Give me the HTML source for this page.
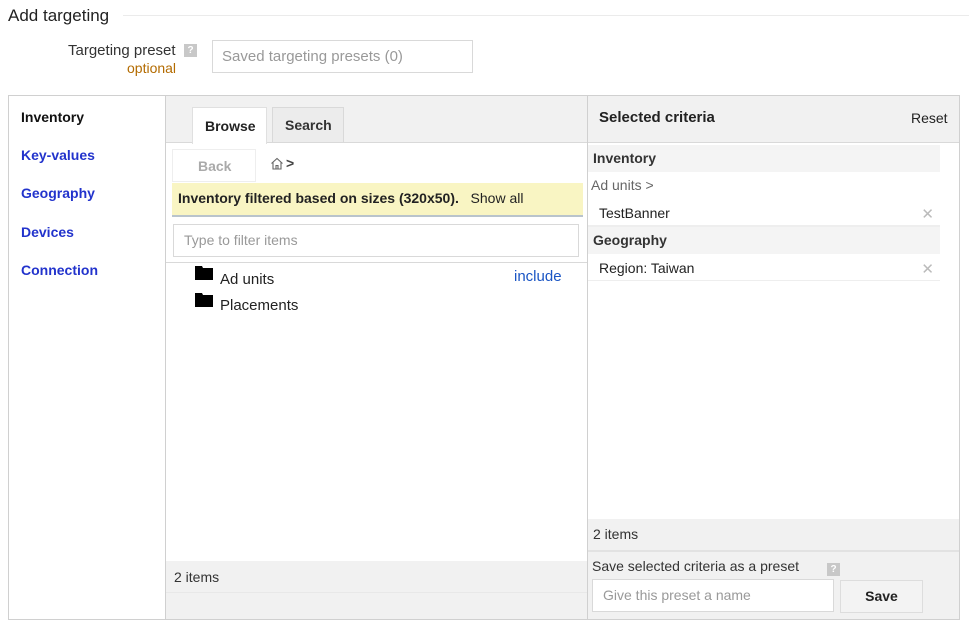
<!DOCTYPE html>
<html><head><style>
*{box-sizing:border-box;margin:0;padding:0}
body{width:969px;height:629px;background:#fff;font-family:"Liberation Sans",Arial,sans-serif;font-size:14px;color:#222;position:relative;overflow:hidden}
.a{position:absolute}
.blue{color:#2233cc;font-weight:bold;font-size:14px}
.q{display:inline-block;width:13px;height:13px;background:#c8c8c8;color:#fff;font-size:10px;font-weight:bold;text-align:center;line-height:13px}
.x{color:#bbb;font-size:15px}
</style></head><body>
<div class="a" style="left:8px;top:6px;font-size:17px;color:#222">Add targeting</div>
<div class="a" style="left:123px;top:15px;width:846px;height:1px;background:#ebebeb"></div>
<div class="a" style="left:68px;top:42px;font-size:15px;color:#333">Targeting preset</div>
<div class="a" style="left:184px;top:40px"><span class="q">?</span></div>
<div class="a" style="left:127px;top:60px;font-size:14px;color:#b36b00">optional</div>
<div class="a" style="left:212px;top:40px;width:261px;height:33px;border:1px solid #d9d9d9;color:#999;padding:7px 9px;font-size:15px">Saved targeting presets (0)</div>

<div class="a" style="left:8px;top:95px;width:952px;height:525px;border:1px solid #d0d0d0"></div>
<div class="a" style="left:21px;top:109px;font-weight:bold;font-size:14px;color:#111">Inventory</div>
<div class="a blue" style="left:21px;top:147px">Key-values</div>
<div class="a blue" style="left:21px;top:185px">Geography</div>
<div class="a blue" style="left:21px;top:224px">Devices</div>
<div class="a blue" style="left:21px;top:262px">Connection</div>

<div class="a" style="left:165px;top:96px;width:1px;height:523px;background:#d0d0d0"></div>
<div class="a" style="left:166px;top:96px;width:421px;height:47px;background:#f1f1f1;border-bottom:1px solid #d9d9d9"></div>
<div class="a" style="left:192px;top:107px;width:75px;height:37px;background:#fff;border:1px solid #e0e0e0;border-bottom:none;font-weight:bold;font-size:14px;padding:10px 0 0 12px">Browse</div>
<div class="a" style="left:272px;top:107px;width:72px;height:36px;background:#ececec;border:1px solid #d9d9d9;font-weight:bold;font-size:14px;padding:9px 0 0 12px;color:#333">Search</div>
<div class="a" style="left:172px;top:149px;width:84px;height:33px;border:1px solid #eee;color:#aaa;font-weight:bold;font-size:14px;padding:8px 0 0 25px">Back</div>
<svg class="a" style="left:270px;top:157px" width="14" height="13" viewBox="0 0 14 13"><path d="M1.5 6.5 L7 1.5 L12.5 6.5 M3 5.5 V12 H11 V5.5 M6 12 V8.5 H8 V12" fill="none" stroke="#666" stroke-width="1.1"/></svg>
<div class="a" style="left:286px;top:155px;font-size:14px;font-weight:bold;color:#444">&gt;</div>
<div class="a" style="left:172px;top:183px;width:411px;height:34px;background:#f9f5c3;border-bottom:2px solid #b9c4cc;padding:7px 0 0 6px;font-size:14px"><b>Inventory filtered based on sizes (320x50).</b>&nbsp;&nbsp; Show all</div>
<div class="a" style="left:173px;top:224px;width:406px;height:33px;border:1px solid #d9d9d9;color:#999;padding:7px 10px;font-size:14px">Type to filter items</div>
<div class="a" style="left:166px;top:262px;width:421px;height:1px;background:#d9d9d9"></div>
<svg class="a" style="left:195px;top:265px" width="18" height="15"><path d="M0 1h7l1 2h10v12H0z" fill="#000"/></svg>
<div class="a" style="left:220px;top:271px;font-size:15px">Ad units</div>
<div class="a" style="left:514px;top:268px;font-size:15px;color:#1a55c4">include</div>
<svg class="a" style="left:195px;top:292px" width="18" height="15"><path d="M0 1h7l1 2h10v12H0z" fill="#000"/></svg>
<div class="a" style="left:220px;top:297px;font-size:15px">Placements</div>
<div class="a" style="left:166px;top:561px;width:421px;height:58px;background:#f1f1f1"></div>
<div class="a" style="left:166px;top:592px;width:421px;height:1px;background:#e8e8e8"></div>
<div class="a" style="left:174px;top:569px;font-size:14px;color:#333">2 items</div>

<div class="a" style="left:587px;top:96px;width:1px;height:523px;background:#d0d0d0"></div>
<div class="a" style="left:588px;top:96px;width:371px;height:47px;background:#f1f1f1;border-bottom:1px solid #d9d9d9"></div>
<div class="a" style="left:599px;top:109px;font-weight:bold;font-size:15px">Selected criteria</div>
<div class="a" style="left:911px;top:110px;font-size:14px">Reset</div>
<div class="a" style="left:588px;top:145px;width:352px;height:27px;background:#f4f4f4;padding:5px 0 0 5px;font-weight:bold;font-size:14px;color:#333">Inventory</div>
<div class="a" style="left:591px;top:177px;font-size:14px;color:#666">Ad units &gt;</div>
<div class="a" style="left:588px;top:200px;width:352px;height:27px;border-bottom:2px solid #eee;padding:5px 0 0 11px;font-size:14px">TestBanner<span class="a x" style="right:6px;top:5px">✕</span></div>
<div class="a" style="left:588px;top:227px;width:352px;height:27px;background:#f4f4f4;padding:5px 0 0 5px;font-weight:bold;font-size:14px;color:#333">Geography</div>
<div class="a" style="left:588px;top:255px;width:352px;height:26px;border-bottom:1px solid #eee;padding:5px 0 0 11px;font-size:14px">Region: Taiwan<span class="a x" style="right:6px;top:5px">✕</span></div>
<div class="a" style="left:588px;top:519px;width:371px;height:100px;background:#f1f1f1"></div>
<div class="a" style="left:588px;top:550px;width:371px;height:2px;background:#e2e2e2"></div>
<div class="a" style="left:593px;top:526px;font-size:14px;color:#333">2 items</div>
<div class="a" style="left:592px;top:558px;font-size:14px;color:#333">Save selected criteria as a preset</div>
<div class="a" style="left:827px;top:559px"><span class="q">?</span></div>
<div class="a" style="left:592px;top:579px;width:242px;height:33px;background:#fff;border:1px solid #d9d9d9;color:#999;padding:7px 10px;font-size:14px">Give this preset a name</div>
<div class="a" style="left:840px;top:580px;width:83px;height:33px;background:#f3f3f3;border:1px solid #ddd;font-weight:bold;font-size:14px;text-align:center;padding-top:7px">Save</div>
</body></html>
